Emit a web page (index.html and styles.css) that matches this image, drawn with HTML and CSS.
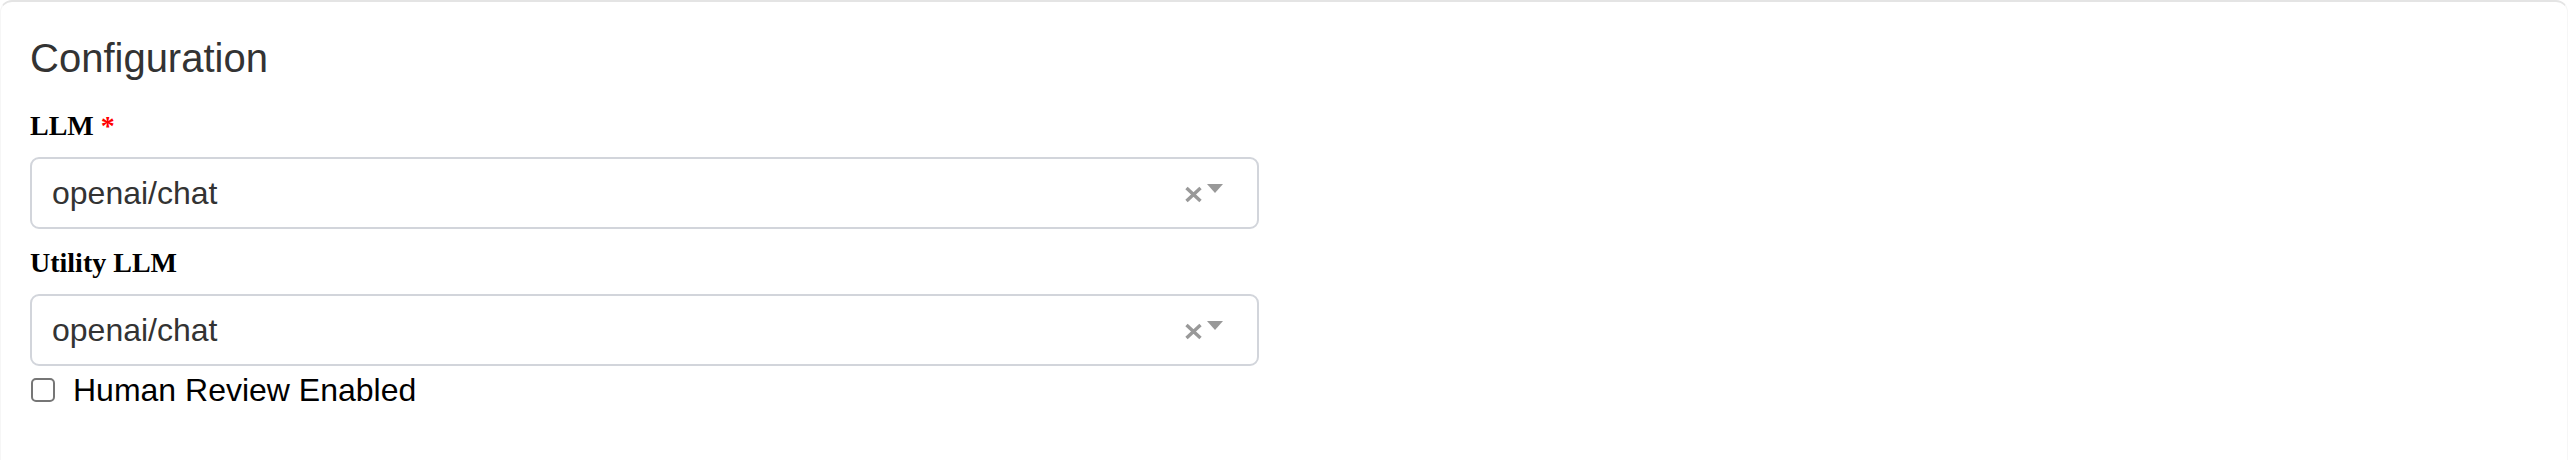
FILE: index.html
```html
<!DOCTYPE html>
<html>
<head>
<meta charset="utf-8">
<link rel="stylesheet" href="styles.css">
</head>
<body>
<div class="card">
  <h5 class="title">Configuration</h5>
  <label class="field-label">LLM <span class="req">*</span></label>
  <div class="select">
    <span class="value">openai/chat</span>
    <span class="controls">
      <svg class="clear" width="19" height="17" viewBox="0 0 19 17"><path d="M2.5 2 L16.5 15 M16.5 2 L2.5 15" stroke="#999" stroke-width="3.4" stroke-linecap="butt"/></svg>
      <svg class="caret" width="16" height="9" viewBox="0 0 16 9"><polygon points="0,0 16,0 8,9" fill="#999"/></svg>
    </span>
  </div>
  <label class="field-label">Utility LLM</label>
  <div class="select">
    <span class="value">openai/chat</span>
    <span class="controls">
      <svg class="clear" width="19" height="17" viewBox="0 0 19 17"><path d="M2.5 2 L16.5 15 M16.5 2 L2.5 15" stroke="#999" stroke-width="3.4" stroke-linecap="butt"/></svg>
      <svg class="caret" width="16" height="9" viewBox="0 0 16 9"><polygon points="0,0 16,0 8,9" fill="#999"/></svg>
    </span>
  </div>
  <label class="check-row">
    <input type="checkbox" class="check">
    <span class="check-text">Human Review Enabled</span>
  </label>
</div>
</body>
</html>
```

FILE: styles.css
```css
html, body {
  margin: 0;
  padding: 0;
  background: #ffffff;
}
body {
  width: 2568px;
  height: 460px;
  overflow: hidden;
}
.card {
  box-sizing: border-box;
  width: 2568px;
  height: 480px;
  border: 1px solid #f6f6f6;
  border-top: 2px solid #e4e4e4;
  border-radius: 12px;
  padding: 32px 29px 0 29px;
  background: #fff;
}
.title {
  margin: 0;
  font-family: "Liberation Sans", Arial, sans-serif;
  font-weight: 400;
  font-size: 40px;
  line-height: 48px;
  color: #333333;
}
.field-label {
  display: block;
  margin: 28px 0 15px 0;
  font-family: "Liberation Serif", "Times New Roman", serif;
  font-weight: 700;
  font-size: 28px;
  line-height: 32px;
  color: #000;
}
.select + .field-label {
  margin-top: 18px;
}
.req {
  color: #ff0000;
}
.select {
  box-sizing: border-box;
  width: 1229px;
  height: 72px;
  border: 2px solid #d2d5db;
  border-radius: 9px;
  display: flex;
  align-items: center;
  justify-content: space-between;
  padding: 0 34px 0 20px;
  font-family: "Liberation Sans", Arial, sans-serif;
  font-size: 32px;
  color: #333333;
}
.value {
  line-height: 40px;
}
.controls {
  display: flex;
  align-items: flex-start;
  gap: 4px;
}
.clear {
  display: block;
  margin-top: 2px;
}
.caret {
  display: block;
}
.check-row {
  display: flex;
  align-items: center;
  margin-top: 10px;
  font-family: "Liberation Sans", Arial, sans-serif;
  font-size: 32px;
  line-height: 28px;
  color: #000;
}
.check {
  appearance: none;
  -webkit-appearance: none;
  box-sizing: border-box;
  width: 24px;
  height: 24px;
  margin: 0 0 0 1px;
  border: 2px solid #767676;
  border-radius: 5px;
  background: #fff;
}
.check-text {
  margin-left: 18px;
}
```
